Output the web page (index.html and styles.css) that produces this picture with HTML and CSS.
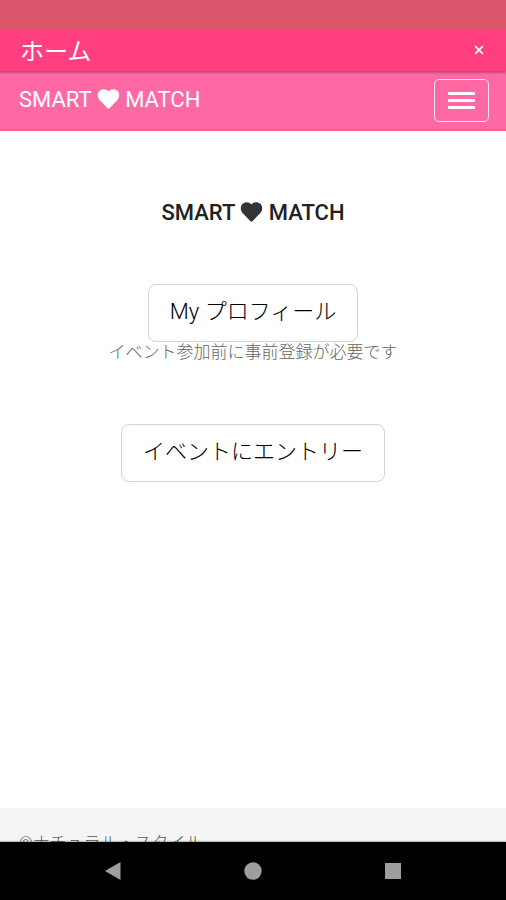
FILE: index.html
```html
<!DOCTYPE html>
<html lang="ja">
<head>
<meta charset="utf-8">
<meta name="viewport" content="width=device-width, initial-scale=1">
<title>ホーム</title>
<link rel="stylesheet" href="styles.css">
</head>
<body>
<div class="status-bar"></div>
<header class="title-bar">
  <span class="title">ホーム</span>
  <button class="close" type="button" aria-label="閉じる">
    <svg width="10" height="10" viewBox="0 0 9 9"><path d="M1 1l7 7M8 1l-7 7" stroke="currentColor" stroke-width="1.4" fill="none"/></svg>
  </button>
</header>
<div class="web-view">
  <div class="page">
    <nav class="navbar">
      <a class="brand" href="#">SMART
        <svg class="heart" viewBox="0 0 24 22"><path d="M12 21.500C11.500 21.500 11 21.200 10.600 20.800L2.200 12C-.4 9.200-.4 4.600 2.200 2 5-.6 9.400-.3 12 2.600 14.600-.3 19-.6 21.800 2c2.600 2.600 2.600 7.200 0 10l-8.400 8.800c-.4.400-.9.700-1.400.700z" fill="currentColor"/></svg>
        MATCH</a>
      <button class="toggle" type="button" aria-label="メニュー">
        <span class="bar"></span><span class="bar"></span><span class="bar"></span>
      </button>
    </nav>
    <main class="content">
      <h1 class="heading">SMART
        <svg class="heart heart-dark" viewBox="0 0 24 22"><path d="M12 21.500C11.500 21.500 11 21.200 10.600 20.800L2.200 12C-.4 9.200-.4 4.600 2.200 2 5-.6 9.400-.3 12 2.600 14.600-.3 19-.6 21.800 2c2.600 2.600 2.600 7.200 0 10l-8.400 8.800c-.4.400-.9.700-1.400.700z" fill="currentColor"/></svg>
        MATCH</h1>
      <button class="action" type="button">My プロフィール</button>
      <p class="note">イベント参加前に事前登録が必要です</p>
      <button class="action" type="button">イベントにエントリー</button>
    </main>
    <footer class="footer">©ナチュラル・スタイル</footer>
  </div>
</div>
<div class="system-nav">
  <button class="key" type="button" aria-label="戻る"><svg width="18" height="18" viewBox="0 0 18 18"><path d="M16.500 0v18L1 9z" fill="currentColor"/></svg></button>
  <button class="key" type="button" aria-label="ホーム画面"><svg width="18" height="18" viewBox="0 0 18 18"><circle cx="9" cy="9" r="8.700" fill="currentColor"/></svg></button>
  <button class="key" type="button" aria-label="履歴"><svg width="18" height="18" viewBox="0 0 18 18"><rect x="1" y="1" width="16" height="16" fill="currentColor"/></svg></button>
</div>
</body>
</html>
```
FILE: styles.css
```css
* {
  box-sizing: border-box;
}

body {
  margin: 0;
  height: 100vh;
  display: flex;
  flex-direction: column;
  background: #fff;
  color: #212121;
  font-family: Roboto, "Noto Sans CJK JP", sans-serif;
}

button {
  font: inherit;
  color: inherit;
  background: none;
  border: 0;
  padding: 0;
}

.status-bar {
  flex: none;
  height: 29px;
  background: #dc566b;
}

.title-bar {
  flex: none;
  display: flex;
  align-items: center;
  justify-content: space-between;
  height: 42px;
  padding: 0 20px;
  background: #ff3f7f;
  color: #fff;
  box-shadow: 0 2px 2px rgba(80, 40, 60, 0.4);
  position: relative;
}

.title {
  padding-top: 4px;
  font-size: 24px;
  line-height: 36px;
}

.close {
  display: flex;
  padding: 2px;
}

.web-view {
  flex: 1;
  min-height: 0;
  overflow: hidden;
}

/* The footer runs on below the visible part of the view. */
.page {
  display: flex;
  flex-direction: column;
  height: calc(100% + 36px);
}

.navbar {
  flex: none;
  display: flex;
  align-items: center;
  justify-content: space-between;
  height: 60px;
  padding: 0 17px 0 19px;
  background: #ff69a3;
  border-bottom: 2px solid #ff5b98;
  color: #fff;
}

.brand {
  color: #fff;
  font-size: 22px;
  line-height: 28px;
  text-decoration: none;
}

.heart {
  width: 23px;
  height: 20px;
  vertical-align: -2px;
}

.heart-dark {
  color: #333;
}

.toggle {
  display: flex;
  flex-direction: column;
  align-items: center;
  justify-content: center;
  gap: 4px;
  width: 55px;
  height: 43px;
  border: 1px solid #ffe4ee;
  border-radius: 5px;
}

.bar {
  width: 27px;
  height: 3px;
  border-radius: 1px;
  background: #fff;
}

.content {
  flex: 1;
  display: flex;
  flex-direction: column;
  align-items: center;
  padding-top: 68px;
}

.heading {
  margin: 0 0 57px;
  font-size: 22px;
  font-weight: 500;
  line-height: 28px;
}

.action {
  height: 58px;
  padding: 0 21px 2px;
  border: 1px solid #d4d4d4;
  border-radius: 8px;
  font-size: 22px;
  font-weight: 300;
  line-height: 32px;
  color: #000;
}

.note {
  margin: 0 0 62px;
  font-size: 17px;
  font-weight: 300;
  line-height: 20px;
  color: #666;
}

.footer {
  flex: none;
  height: 70px;
  padding: 24px 19px;
  background: #f5f5f5;
  font-size: 17px;
  font-weight: 300;
  line-height: 22px;
  color: #555;
}

.system-nav {
  flex: none;
  display: flex;
  align-items: center;
  justify-content: center;
  gap: 122px;
  height: 58px;
  background: #000;
  box-shadow: 0 0 2px rgba(0, 0, 0, 0.7);
  color: #9e9e9e;
}

.key {
  display: flex;
}
```
